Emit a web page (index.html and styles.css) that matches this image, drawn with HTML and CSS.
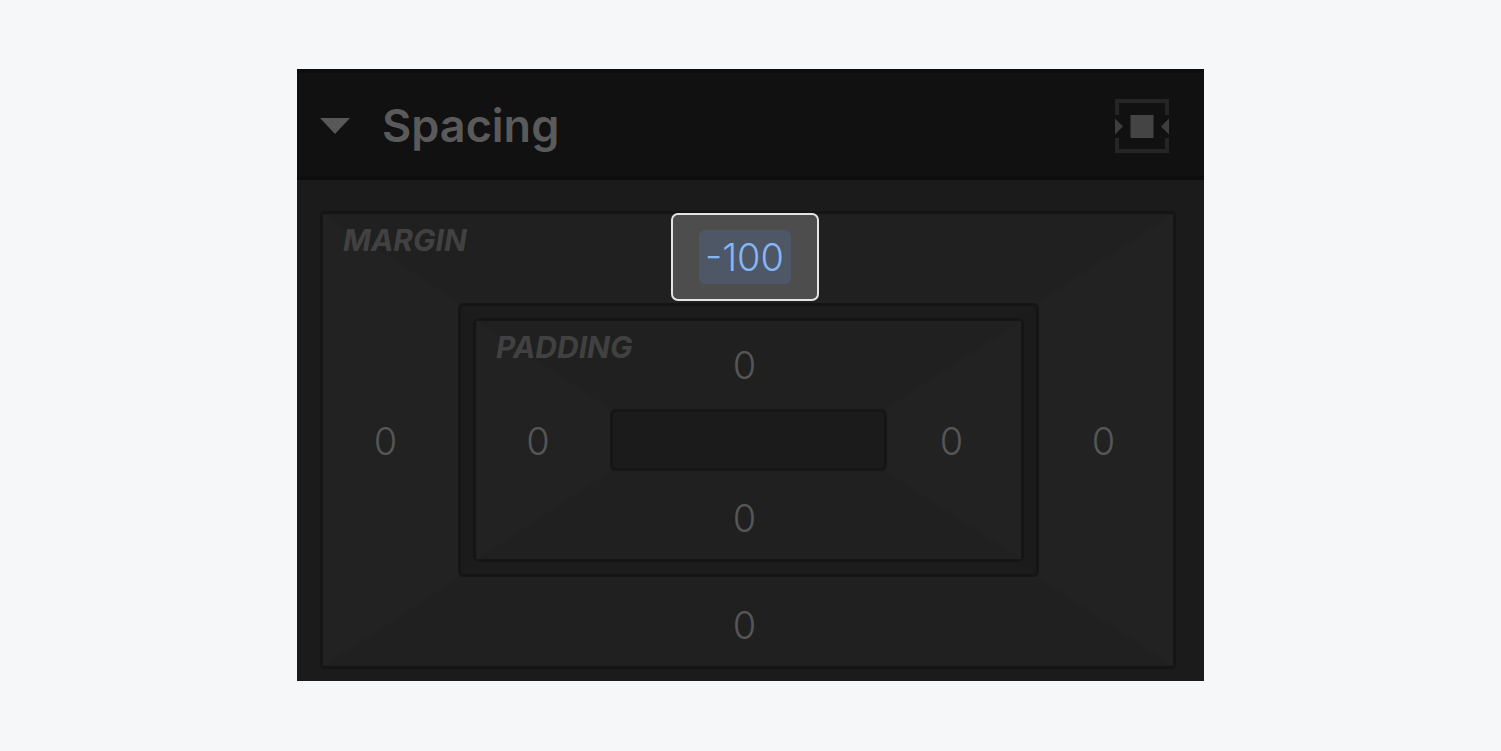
FILE: index.html
```html
<!DOCTYPE html>
<html lang="en">
<head>
<meta charset="utf-8">
<title>Spacing</title>
<link rel="stylesheet" href="styles.css">
</head>
<body>
<section class="panel">
  <header class="panel-header">
    <button class="toggle" type="button" aria-expanded="true">
      <svg class="caret" width="30" height="16" viewBox="0 0 30 16" aria-hidden="true"><path d="M0 0H30L15 16Z" fill="#585858"/></svg>
      <span>Spacing</span>
    </button>
    <button class="center-button" type="button" aria-label="Center element">
      <svg width="54" height="54" viewBox="0 0 54 54" aria-hidden="true">
        <path d="M2 16V2H52V16M2 39V52H52V39" fill="none" stroke="#252525" stroke-width="4"/>
        <rect x="15.500" y="16" width="23" height="23" fill="#444"/>
        <path d="M0 19.500 8 27.500 0 35.500ZM54 19.500 46 27.500 54 35.500Z" fill="#3e3e3e"/>
      </svg>
    </button>
  </header>
  <div class="panel-body">
    <div class="ring margin-ring">
      <div class="corner top-left"><span class="ring-label">MARGIN</span></div>
      <div class="cell editing">
        <label class="field"><input class="field-input" type="text" value="-100" aria-label="Margin top"></label>
      </div>
      <div class="corner top-right"></div>
      <div class="cell side"><button class="value" type="button" aria-label="Margin left">0</button></div>
      <div class="hole">
        <div class="ring padding-ring">
          <div class="corner top-left"><span class="ring-label">PADDING</span></div>
          <div class="cell top"><button class="value" type="button" aria-label="Padding top">0</button></div>
          <div class="corner top-right"></div>
          <div class="cell side"><button class="value" type="button" aria-label="Padding left">0</button></div>
          <div class="core"></div>
          <div class="cell side right"><button class="value" type="button" aria-label="Padding right">0</button></div>
          <div class="corner bottom-left"></div>
          <div class="cell bottom"><button class="value" type="button" aria-label="Padding bottom">0</button></div>
          <div class="corner bottom-right"></div>
        </div>
      </div>
      <div class="cell side right"><button class="value" type="button" aria-label="Margin right">0</button></div>
      <div class="corner bottom-left"></div>
      <div class="cell bottom"><button class="value" type="button" aria-label="Margin bottom">0</button></div>
      <div class="corner bottom-right"></div>
    </div>
  </div>
</section>
</body>
</html>
```
FILE: styles.css
```css
* {
  box-sizing: border-box;
}

body {
  margin: 0;
  padding: 69px 24px;
  background: #f6f7f9;
  font-family: Inter, "Liberation Sans", sans-serif;
}

button,
input {
  margin: 0;
  padding: 0;
  border: 0;
  background: none;
  color: inherit;
  font: inherit;
}

.panel {
  max-width: 907px;
  margin: 0 auto;
  background: #1b1b1b;
}

.panel-header {
  display: flex;
  align-items: center;
  justify-content: space-between;
  padding: 26px 35px 23px 23px;
  border-top: 4px solid #0d0d0d;
  border-bottom: 4px solid #0d0d0d;
  background: #111;
}

.toggle {
  display: flex;
  align-items: center;
  gap: 32px;
  color: #5a5a5a;
  font-size: 45px;
  font-weight: 600;
  line-height: 52px;
}

.center-button,
.center-button svg {
  display: block;
}

.panel-body {
  padding: 31px 28px 12px 23px;
}

.ring {
  display: grid;
  border: 3px solid #151515;
  border-radius: 6px;
  background: #202020;
}

.margin-ring {
  grid-template: 89px auto 89px / 135px 1fr 134px;
}

.padding-ring {
  grid-template: 88px 62px 88px / 134px 1fr 134px;
}

.top-left {
  background: linear-gradient(to top right, #222 50%, #202020 50%);
}

.top-right {
  background: linear-gradient(to top left, #222 50%, #202020 50%);
}

.bottom-left {
  background: linear-gradient(to bottom right, #222 50%, #202020 50%);
}

.bottom-right {
  background: linear-gradient(to bottom left, #222 50%, #202020 50%);
}

.ring-label {
  display: block;
  padding: 8px 0 0 20px;
  color: #414141;
  font-size: 30px;
  font-style: italic;
  font-weight: 700;
  line-height: 36px;
  white-space: nowrap;
}

.cell {
  display: flex;
  align-items: center;
  justify-content: center;
  padding-right: 8px;
}

.side {
  padding-top: 2px;
  padding-right: 10px;
  background: #222;
}

.right {
  padding-right: 5px;
}

.bottom {
  padding-top: 6px;
}

.editing {
  padding-bottom: 4px;
}

.value {
  color: #565656;
  font-size: 38px;
  font-weight: 350;
  line-height: 48px;
}

.hole {
  padding: 12px;
  border: 3px solid #151515;
  border-radius: 6px;
  background: #1b1b1b;
}

.core {
  border: 3px solid #151515;
  border-radius: 6px;
  background: #1b1b1b;
}

.field {
  flex: none;
  padding: 15px 26px;
  border: 2px solid #e4e4e4;
  border-radius: 7px;
  background: #4d4d4d;
}

.field-input {
  display: block;
  width: 92px;
  height: 54px;
  border-radius: 6px;
  background: #4e5766;
  color: #86b6f6;
  font-size: 38px;
  font-weight: 350;
  text-align: center;
}
```
